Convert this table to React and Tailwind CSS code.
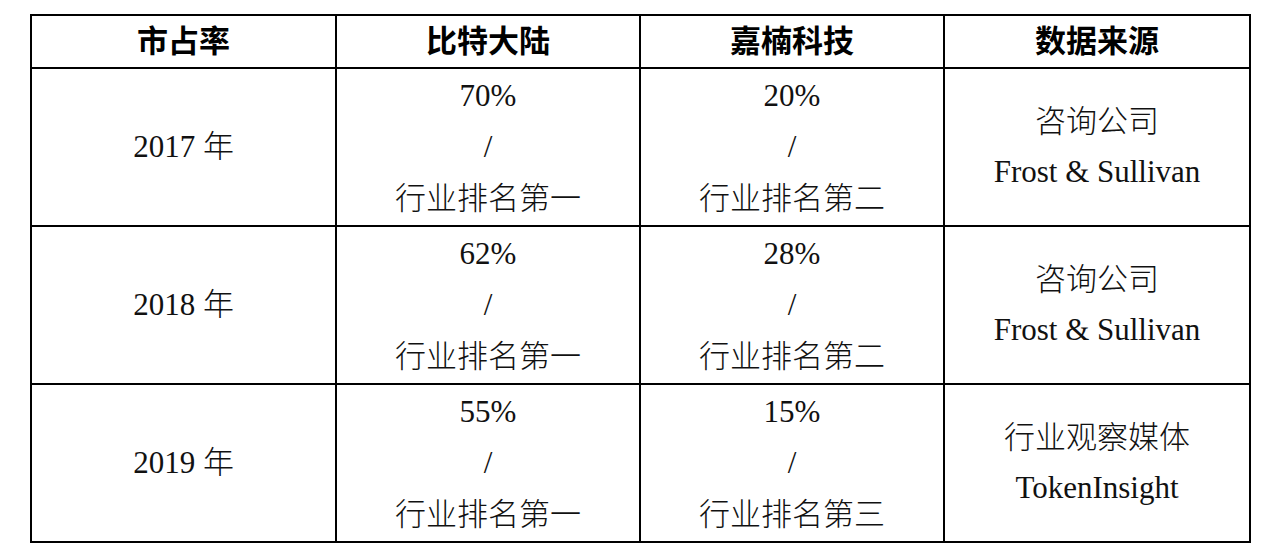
import React from "react";

const rows = [
  { year: "2017 年", a: ["70%", "/", "行业排名第一"], b: ["20%", "/", "行业排名第二"], src: ["咨询公司", "Frost & Sullivan"] },
  { year: "2018 年", a: ["62%", "/", "行业排名第一"], b: ["28%", "/", "行业排名第二"], src: ["咨询公司", "Frost & Sullivan"] },
  { year: "2019 年", a: ["55%", "/", "行业排名第一"], b: ["15%", "/", "行业排名第三"], src: ["行业观察媒体", "TokenInsight"] },
];

const font = { fontFamily: '"Liberation Serif", "Noto Sans CJK SC", serif' };

function Lines({ items, lh }) {
  return (
    <div className="flex flex-col items-center">
      {items.map((t, i) => (
        <div key={i} className={lh}>{t}</div>
      ))}
    </div>
  );
}

export default function App() {
  return (
    <div className="w-[1282px] h-[556px] bg-white pt-[14px] pl-[30px]" style={font}>
      <table className="table-fixed border-collapse w-[1221px] text-[31px] text-[#111] font-light">
        <colgroup>
          <col className="w-[305px]" />
          <col className="w-[304px]" />
          <col className="w-[304px]" />
          <col className="w-[306px]" />
        </colgroup>
        <thead>
          <tr className="h-[53px]">
            {["市占率", "比特大陆", "嘉楠科技", "数据来源"].map((h) => (
              <th key={h} className="border-2 border-black font-bold text-black text-center align-middle leading-[40px] p-0">
                {h}
              </th>
            ))}
          </tr>
        </thead>
        <tbody>
          {rows.map((r) => (
            <tr key={r.year} className="h-[158px]">
              <td className="border-2 border-black text-center align-middle p-0">{r.year}</td>
              <td className="border-2 border-black text-center align-middle p-0">
                <Lines items={r.a} lh="leading-[51.5px]" />
              </td>
              <td className="border-2 border-black text-center align-middle p-0">
                <Lines items={r.b} lh="leading-[51.5px]" />
              </td>
              <td className="border-2 border-black text-center align-middle p-0">
                <Lines items={r.src} lh="leading-[50px]" />
              </td>
            </tr>
          ))}
        </tbody>
      </table>
    </div>
  );
}
